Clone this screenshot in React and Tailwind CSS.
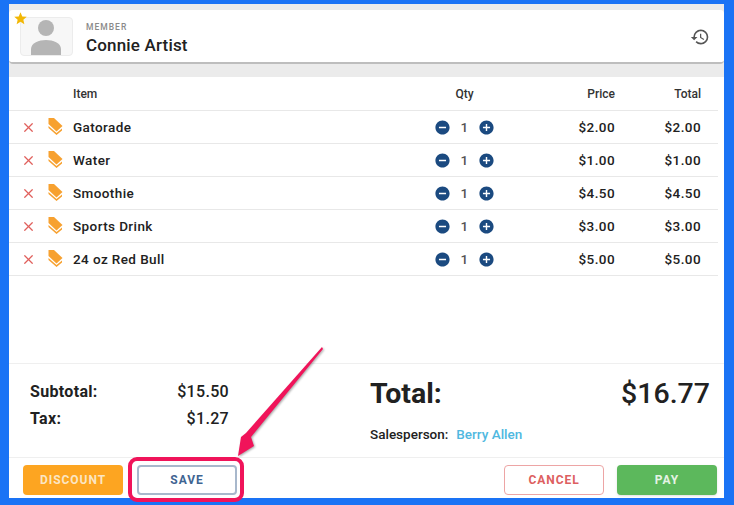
import { FiX } from "react-icons/fi";
import { MdHistory, MdStar, MdRemoveCircle, MdAddCircle } from "react-icons/md";

const items = [
  { name: "Gatorade", price: "$2.00" },
  { name: "Water", price: "$1.00" },
  { name: "Smoothie", price: "$4.50" },
  { name: "Sports Drink", price: "$3.00" },
  { name: "24 oz Red Bull", price: "$5.00" },
];

function TagIcon() {
  return (
    <svg width="15" height="17" viewBox="0 0 15 17" className="ml-[12px] -mt-[2px]" fill="#f7a130">
      <path d="M0.5 0 H6 L14.5 8 L8.5 13.5 L0.5 6 Z" />
      <path d="M0.5 8 L8.5 15 L14 10.5 V12.5 L8.5 17 L0.5 10 Z" />
    </svg>
  );
}

function Avatar() {
  return (
    <div className="w-[53px] h-[39px] mt-px bg-[#f7f7f7] border border-[#ececec] rounded-sm">
      <svg width="51" height="37" viewBox="0 0 51 37" fill="#b5b5b5">
        <circle cx="25" cy="10" r="8" />
        <path d="M10 37 V31 C10 25 18 22 25 22 C32 22 40 25 40 31 V37 Z" />
      </svg>
    </div>
  );
}

function App() {
  return (
    <div className="relative w-[734px] h-[505px] overflow-hidden bg-[#1a73f5] pt-1 pl-[9px] pr-[10px] pb-[7px] font-['Roboto',sans-serif] text-[#212121]">
      <div className="flex flex-col h-full bg-white">
        {/* Member header */}
        <div className="bg-[#ebebeb] pt-1.5 pb-[13px]">
          <div className="relative flex items-center h-[54px] pl-[11px] pr-[14px] bg-white rounded-sm border-b-2 border-[#bdbdbd]">
            <MdStar className="absolute left-[4px] top-[1px] text-[15px] text-[#f2b705]" />
            <Avatar />
            <div className="ml-[13px] flex-1 pt-[4px]">
              <div className="text-[8.5px] leading-[10px] font-medium tracking-[0.12em] text-[#8a8a8a]">MEMBER</div>
              <div className="mt-[3px] text-[17px] leading-5 font-medium tracking-[0.01em]">Connie Artist</div>
            </div>
            <MdHistory className="mt-px text-[20px] text-[#555555]" />
          </div>
        </div>

        {/* Item table */}
        <div className="flex items-center h-[34px] mr-[6px] pr-[17px] border-b border-[#e8e8e8] text-[12px] font-medium text-[#333333]">
          <div className="w-[64px]" />
          <div className="flex-1">Item</div>
          <div className="w-[61px] text-center mr-[60px]">Qty</div>
          <div className="w-[60px] text-right">Price</div>
          <div className="w-[86px] text-right">Total</div>
        </div>
        {items.map((item) => (
          <div key={item.name} className="flex items-center h-[33px] mr-[6px] pr-[17px] border-b border-[#e8e8e8] text-[13.5px] font-medium tracking-[0.03em]">
            <div className="flex items-center w-[64px] pl-[12px]">
              <FiX className="text-[15px] text-[#e0605c]" />
              <TagIcon />
            </div>
            <div className="flex-1">{item.name}</div>
            <div className="flex items-center justify-between w-[61px] mr-[60px]">
              <MdRemoveCircle className="mt-px text-[17px] text-[#1b4a80]" />
              <span className="text-[#555555]">1</span>
              <MdAddCircle className="mt-px text-[17px] text-[#1b4a80]" />
            </div>
            <div className="w-[60px] text-right">{item.price}</div>
            <div className="w-[86px] text-right">{item.price}</div>
          </div>
        ))}
        <div className="flex-1" />

        {/* Totals */}
        <div className="flex h-[95px] border-t border-b border-[#efefef]">
          <div className="w-[199px] ml-[21px] pt-[16px] text-[16px] font-medium tracking-[0.02em]">
            <div className="flex justify-between h-[27px]">
              <span className="font-bold">Subtotal:</span>
              <span>$15.50</span>
            </div>
            <div className="flex justify-between">
              <span className="font-bold">Tax:</span>
              <span>$1.27</span>
            </div>
          </div>
          <div className="flex-1 ml-[141px] pr-[14px] pt-[14px]">
            <div className="flex justify-between text-[28.5px] leading-[32px] font-medium">
              <span className="font-bold">Total:</span>
              <span>$16.77</span>
            </div>
            <div className="mt-[14px] text-[13.5px] font-medium">
              Salesperson:<span className="ml-[8px] text-[#4fb8e0]">Berry Allen</span>
            </div>
          </div>
        </div>

        {/* Actions */}
        <div className="flex items-start h-[40px] pt-[7px] pl-[14px] pr-[7px] text-[12px] font-bold tracking-[0.08em]">
          <button className="w-[100px] h-[30px] bg-[#fda521] text-[#fbe6c4] rounded-sm">DISCOUNT</button>
          <button className="ml-[14px] w-[100px] h-[30px] border-2 border-[#a8b8cc] text-[#3f6592] rounded-sm">SAVE</button>
          <div className="flex-1" />
          <button className="w-[100px] h-[30px] border border-[#eda5a5] text-[#dd6060] rounded-sm">CANCEL</button>
          <button className="ml-[13px] w-[100px] h-[30px] bg-[#5cb85c] text-[#e4f3e4] rounded-sm shadow-sm">PAY</button>
        </div>
      </div>

      {/* Callout over the save button */}
      <div className="absolute left-[128px] top-[457px] w-[116px] h-[45px] border-[4px] border-[#f0145a] rounded-[9px]" />
      <svg className="absolute left-0 top-0 drop-shadow-[1px_1px_1px_rgba(0,0,0,0.35)]" width="734" height="505" viewBox="0 0 734 505">
        <path d="M322 347 L323 349 L251 437 L254 446 L238 456 L241 437 L246 433 Z" fill="#f0145a" />
      </svg>
    </div>
  );
}

export default App;
